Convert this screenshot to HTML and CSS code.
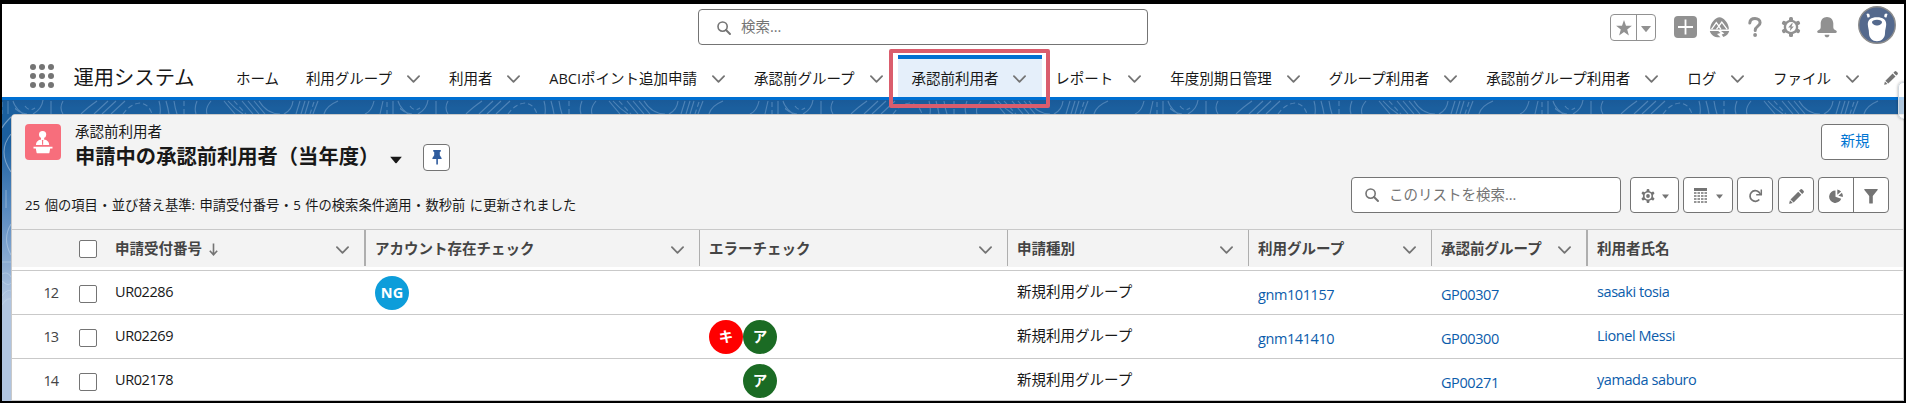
FILE: index.html
```html
<!DOCTYPE html>
<html lang="ja">
<head>
<meta charset="utf-8">
<title>承認前利用者</title>
<link rel="stylesheet" href="styles.css">
</head>
<body>
<svg class="defs" aria-hidden="true">
  <symbol id="chev" viewBox="0 0 14 8"><path d="M1 1l6 6 6-6" fill="none" stroke="currentColor" stroke-width="1.9" stroke-linecap="round" stroke-linejoin="round"/></symbol>
  <symbol id="search" viewBox="0 0 14 14"><circle cx="5.6" cy="5.6" r="4.6" fill="none" stroke="currentColor" stroke-width="1.6"/><path d="M9 9l4 4" stroke="currentColor" stroke-width="1.9" stroke-linecap="round"/></symbol>
  <symbol id="caret" viewBox="0 0 10 6"><path d="M.5 0h9q.6.1.2.6L5.400 5.700q-.4.4-.8 0L.3.600Q0 .1.500 0z" fill="currentColor"/></symbol>
  <symbol id="pencil" viewBox="0 0 14 14"><path d="M10.600.5a1.300 1.300 0 0 1 1.800 0l1.100 1.100a1.300 1.300 0 0 1 0 1.800l-1.200 1.200-2.900-2.900zM8.600 2.500l2.900 2.900-7.200 7.200-2.900-2.900zM.9 10.500l2.600 2.600-2.900.7q-.5.1-.4-.4z" fill="currentColor"/></symbol>
  <symbol id="gear" viewBox="0 0 20 20"><g fill="currentColor"><circle cx="10" cy="10" r="7.300"/><rect x="8" y="0" width="4" height="20" rx="1.500"/><rect x="8" y="0" width="4" height="20" rx="1.500" transform="rotate(60 10 10)"/><rect x="8" y="0" width="4" height="20" rx="1.500" transform="rotate(120 10 10)"/></g><circle cx="10" cy="10" r="4.900" fill="#fff"/></symbol>
</svg>
<div class="window">
  <header class="top">
    <div class="search"><svg width="14" height="14"><use href="#search"/></svg><span>検索...</span></div>
    <div class="tools">
      <div class="fav">
        <span class="fav-star"><svg width="16" height="16" viewBox="0 0 16 16"><path d="M8 0l2 5.700h5.900l-4.700 3.700L12.900 15.500 8 11.900l-4.900 3.600 1.700-6.100L.1 5.700H6z" fill="#919191"/></svg></span>
        <span class="fav-menu"><svg width="10" height="6"><use href="#caret"/></svg></span>
      </div>
      <svg class="t-add" width="23" height="22" viewBox="0 0 23 22"><rect width="23" height="22" rx="4" fill="#919191"/><path d="M11.500 3.500v15M4 11h15" stroke="#fff" stroke-width="1.800"/></svg>
      <svg class="t-trail" width="21" height="21" viewBox="0 0 21 21"><path d="M10.500.3c4 .2 8.700 5.500 9.300 10.700.1 1-.3 1.500-1 1.500H2.200c-.7 0-1.100-.5-1-1.500C1.800 5.800 6.500.5 10.500.3zM.8 14h8.400l2.300 2-3.500 1 3.500 3.200C6.500 21 2.200 18.500.8 14zM12 14h8.200c-.7 2.800-2.700 5-5.900 6l-1.600-2.400 2.700-1.200z" fill="#919191"/><path d="M2.500 12.300l4.800-6.600 2.600 3.500 2.900-4 5.400 7.100M7.500 12.300l2.400-3.100 2 3.100" fill="none" stroke="#fff" stroke-width="1.300"/></svg>
      <svg class="t-help" width="14" height="20" viewBox="0 0 14 20"><path d="M1.800 6C2 3 4 1.600 7 1.600s5.100 1.700 5.100 4.200C12.100 9.400 7.200 9 7.200 13.500" fill="none" stroke="#919191" stroke-width="3" stroke-linecap="round"/><circle cx="7.100" cy="18" r="1.900" fill="#919191"/></svg>
      <svg class="t-gear" width="20" height="20" viewBox="0 0 20 20"><use href="#gear"/><path d="M10.800 6.200L7.200 10.500h2.300l-.6 3.400 3.900-4.500h-2.400l1.500-3.200z" fill="#919191"/></svg>
      <svg class="t-bell" width="20" height="21" viewBox="0 0 20 21"><path d="M10 0c3.700 0 6.300 2.800 6.300 6.500v3.800c0 1.700 1 2.400 2.700 3.200 1.300.8.900 2.500-.4 2.500H1.400C.1 16-.3 14.300 1 13.500c1.700-.8 2.700-1.500 2.700-3.200V6.500C3.700 2.800 6.300 0 10 0zM7.700 17.700h4.600c.3 1.500-1 2.500-2.300 2.500s-2.600-1-2.300-2.500z" fill="#919191"/></svg>
      <svg class="avatar" width="38" height="38" viewBox="0 0 38 38"><circle cx="19" cy="19" r="18.300" fill="#54698d" stroke="#8c8c8c" stroke-width="1.400"/><path d="M8.500 8q1.500-1.400 3 .4l.3 2q-.8 1.600-2.300 1zM29.500 8q-1.500-1.400-3 .4l-.3 2q.8 1.600 2.300 1z" fill="#fff"/><path d="M19 11.300c6 0 9.200 2.500 9.200 7 0 3-1.200 5-1.200 9 0 4.700-3.500 8-8 8s-8-3.300-8-8c0-4-1.200-6-1.200-9 0-4.500 3.200-7 9.200-7z" fill="#fff"/><path d="M19 13.800c3 0 5 1 5 2.300 0 2-2.800 3.500-5 3.500s-5-1.500-5-3.500c0-1.300 2-2.300 5-2.300z" fill="#54698d"/></svg>
    </div>
  </header>
  <nav class="nav">
    <svg class="waffle" width="24" height="24" viewBox="0 0 24 24" fill="#747474"><circle cx="3" cy="3" r="3"/><circle cx="12" cy="3" r="3"/><circle cx="21" cy="3" r="3"/><circle cx="3" cy="12" r="3"/><circle cx="12" cy="12" r="3"/><circle cx="21" cy="12" r="3"/><circle cx="3" cy="21" r="3"/><circle cx="12" cy="21" r="3"/><circle cx="21" cy="21" r="3"/></svg>
    <span class="app">運用システム</span>
    <a class="tab tab-plain">ホーム</a>
    <a class="tab">利用グループ<svg class="chev"><use href="#chev"/></svg></a>
    <a class="tab">利用者<svg class="chev"><use href="#chev"/></svg></a>
    <a class="tab">ABCIポイント追加申請<svg class="chev"><use href="#chev"/></svg></a>
    <a class="tab">承認前グループ<svg class="chev"><use href="#chev"/></svg></a>
    <a class="tab active">承認前利用者<svg class="chev"><use href="#chev"/></svg><i class="highlight"></i></a>
    <a class="tab">レポート<svg class="chev"><use href="#chev"/></svg></a>
    <a class="tab">年度別期日管理<svg class="chev"><use href="#chev"/></svg></a>
    <a class="tab">グループ利用者<svg class="chev"><use href="#chev"/></svg></a>
    <a class="tab">承認前グループ利用者<svg class="chev"><use href="#chev"/></svg></a>
    <a class="tab">ログ<svg class="chev"><use href="#chev"/></svg></a>
    <a class="tab">ファイル<svg class="chev"><use href="#chev"/></svg></a>
    <svg class="nav-edit" width="14" height="14"><use href="#pencil"/></svg>
    <i class="handle"></i>
  </nav>
  <main class="stage">
    <svg class="contour" width="1902" height="300">
      <defs>
        <pattern id="topo" x="13" y="0" width="385" height="14" patternUnits="userSpaceOnUse">
          <g fill="none" stroke="#6f9dca" stroke-opacity=".6" stroke-width="1.100">
            <path d="M-2 6Q3 13 12 14M28 0Q27 9 18 14M36 1V14M48 1Q44 8 48 14M66 14Q72 8 82 1M79 14L93 1M87 14L101 1M96 14L110 1M144 1Q146 8 145 14M151 1Q153 8 154 14M159 1Q160 8 162 14M182 1Q179 8 181 14M196 1Q190 8 192 14M209 1L220 14M213 1Q220 9 228 14M227 1L238 14M233 1L244 14M239 1L250 14M244 1Q252 14 265 14M278 1Q277 10 269 14M285 1L281 14M290 1L286 14M294 1L290 14M303 1L298 14M309 14Q311 6 323 1M359 1Q357 11 350 14M368 1L365 14M378 1V14M383 1Q386 10 394 14M-2 1Q0 8 8 14"/>
            <path stroke-dasharray="5 3" d="M10 6Q14 12 20 8M108 14Q115 4 125 3Q134 4 137 14M169 1V14M219 1L231 14M299 2L295 14M372 2V14"/>
          </g>
        </pattern>
      </defs>
      <rect width="1902" height="14" fill="url(#topo)"/>
      <g fill="none" stroke="#c4d7ec" stroke-opacity=".5" stroke-width="1.100"><path d="M9 17Q2 24 0 28M9 34Q-5 51 9 72M4 90V108M9 124Q0 139 9 155M0 162H9M0 174Q6 171 9 177M0 181Q6 187 9 183M0 196Q5 189 9 191M0 205Q4 198 9 199"/></g>
    </svg>
    <section class="card">
      <div class="head">
        <div class="title-row">
          <svg class="obj" width="36" height="36" viewBox="0 0 36 36"><rect width="36" height="36" rx="4" fill="#f76e7c"/><g fill="#fff"><circle cx="17.600" cy="10.500" r="3.600"/><path d="M16 12h3.200v4H16zM11 21c0-3.500 2.500-5 5-5.500l1.600 1.500 1.600-1.500c2.500.5 5 2 5 5.500z"/><path d="M8.500 22.800h19v1.600h-2.300l-.8 4.300q-.2.500-.8.500h-11.200q-.6 0-.8-.5l-.8-4.300H8.500z"/></g><path d="M17.600 16.300v4.500" stroke="#f76e7c" stroke-width="1.100"/></svg>
          <div class="titles">
            <div class="kind">承認前利用者</div>
            <div class="name-row"><h1>申請中の承認前利用者（当年度）</h1><svg class="name-caret" width="12" height="8" viewBox="0 0 10 6"><use href="#caret"/></svg>
              <button class="pin"><svg width="10" height="15" viewBox="0 0 10 15"><path d="M1.200 0h7.600v1.500l-1 .5v3.200L9.600 8v1H5.900v5.500H4.300V9H.4V8l1.800-2.800V2l-1-.5z" fill="#2f5c9e"/></svg></button></div>
          </div>
          <button class="new">新規</button>
        </div>
        <div class="meta-row">
          <span class="meta">25 個の項目 • 並び替え基準: 申請受付番号 • 5 件の検索条件適用 • 数秒前 に更新されました</span>
          <div class="list-search"><svg width="14" height="14"><use href="#search"/></svg><span>このリストを検索...</span></div>
          <button class="btn wide1"><svg width="14" height="14" viewBox="0 0 20 20"><use href="#gear"/><circle cx="10" cy="10" r="2.700" fill="currentColor"/></svg><svg width="7" height="5"><use href="#caret"/></svg></button>
          <button class="btn wide2"><svg width="13" height="16" viewBox="0 0 13 16"><path d="M0 0h13v3H0z" fill="currentColor"/><path d="M0 5h13M0 8h13M0 11h13M0 14h13" stroke="currentColor" stroke-width="1.700" stroke-dasharray="2.500 1"/></svg><svg width="7" height="5"><use href="#caret"/></svg></button>
          <button class="btn sq1"><svg width="15" height="14" viewBox="0 0 15 14"><path d="M11.300 10.500A5.300 5.300 0 1 1 10.800 3L12.500 5" fill="none" stroke="currentColor" stroke-width="1.700"/><path d="M13.300.6v5.200H8.200" fill="none" stroke="currentColor" stroke-width="1.500"/></svg></button>
          <button class="btn sq2"><svg width="15" height="15"><use href="#pencil"/></svg></button>
          <div class="group">
            <span><svg width="15" height="15" viewBox="0 0 15 15"><path d="M6.500 1.500v6.300l5.700 1.900A6.200 6.200 0 1 1 6.500 1.500z" fill="currentColor"/><path d="M8.300.5a6 6 0 0 1 3.800 2L8.300 5.800zM12.900 3.800q1.200 1.900.9 4.200L9.400 6.800z" fill="currentColor"/></svg></span>
            <span><svg width="14" height="15" viewBox="0 0 14 15"><path d="M.7 0h12.600q.8.200.3 1L8.800 7v7q0 .6-.6.6H5.800q-.6 0-.6-.6V7L.4 1Q-.1.200.7 0z" fill="currentColor"/></svg></span>
          </div>
        </div>
      </div>
      <div class="grid thead">
        <span></span><span class="check"><i></i></span>
        <span class="th">申請受付番号<svg class="sort" width="9" height="13" viewBox="0 0 9 13"><path d="M4.500.5v11M.8 7.800l3.700 4 3.700-4" fill="none" stroke="currentColor" stroke-width="1.600"/></svg><svg class="chev"><use href="#chev"/></svg></span>
        <span class="th thick">アカウント存在チェック<svg class="chev"><use href="#chev"/></svg></span>
        <span class="th">エラーチェック<svg class="chev"><use href="#chev"/></svg></span>
        <span class="th">申請種別<svg class="chev"><use href="#chev"/></svg></span>
        <span class="th">利用グループ<svg class="chev"><use href="#chev"/></svg></span>
        <span class="th">承認前グループ<svg class="chev"><use href="#chev"/></svg></span>
        <span class="th thick">利用者氏名</span>
      </div>
      <div class="grid row">
        <span class="num">12</span><span class="check"><i></i></span><span class="td latin">UR02286</span>
        <span class="td wide"><b class="dot blue">NG</b></span><span class="td"></span>
        <span class="td jp">新規利用グループ</span><a class="td latin low">gnm101157</a><a class="td latin low">GP00307</a><a class="td latin wide">sasaki tosia</a>
      </div>
      <div class="grid row">
        <span class="num">13</span><span class="check"><i></i></span><span class="td latin">UR02269</span>
        <span class="td wide"></span><span class="td"><b class="dot red">キ</b><b class="dot green">ア</b></span>
        <span class="td jp">新規利用グループ</span><a class="td latin low">gnm141410</a><a class="td latin low">GP00300</a><a class="td latin wide">Lionel Messi</a>
      </div>
      <div class="grid row">
        <span class="num">14</span><span class="check"><i></i></span><span class="td latin">UR02178</span>
        <span class="td wide"></span><span class="td"><b class="dot gap"></b><b class="dot green">ア</b></span>
        <span class="td jp">新規利用グループ</span><a class="td latin low"></a><a class="td latin low">GP00271</a><a class="td latin wide">yamada saburo</a>
      </div>
    </section>
  </main>
</div>
</body>
</html>
```
FILE: styles.css
```css
* { box-sizing: border-box; }
body {
  margin: 0;
  background: #000;
  color: #181818;
  font: 14.5px/20px "Open Sans", "Noto Sans CJK JP", sans-serif;
  overflow: hidden;
}
svg { display: block; flex: none; }
button { font: inherit; padding: 0; margin: 0; }
.defs { position: absolute; width: 0; height: 0; }
.window {
  width: 1906px;
  height: 403px;
  border: solid #000;
  border-width: 4px 2px 2px;
  background: #fff;
  overflow: hidden;
}

/* global header */
.top { height: 46px; display: flex; position: relative; }
.search {
  width: 450px;
  height: 36px;
  margin: 5px 0 0 696px;
  padding: 0 18px;
  display: flex;
  align-items: center;
  gap: 10px;
  border: 1px solid #747474;
  border-radius: 4px;
  color: #747474;
}
.search svg { margin-top: 2px; }
.tools { display: flex; margin-left: 462px; align-items: flex-start; }
.fav {
  display: flex;
  width: 46px;
  height: 27px;
  margin-top: 10px;
  border: 1px solid #919191;
  border-radius: 4px;
  color: #919191;
}
.fav span { display: flex; align-items: center; justify-content: center; }
.fav-star { width: 25px; }
.fav-menu { flex: 1; border-left: 1px solid #919191; padding-top: 2px; }
.t-add { margin: 12px 0 0 18px; }
.t-trail { margin: 13px 0 0 12px; }
.t-help { margin: 13px 0 0 18px; }
.t-gear { margin: 13px 0 0 19px; color: #919191; }
.t-bell { margin: 13px 0 0 16px; }
.avatar { margin: 2px 0 0 21px; }

/* app navigation */
.nav {
  position: relative;
  height: 50px;
  display: flex;
  align-items: flex-end;
  border-bottom: 3px solid #0070d2;
}
.waffle { margin: 0 0 9px 28px; }
.app { font-size: 20.3px; width: 149.5px; margin: 0 0 10px 19.5px; white-space: nowrap; flex: none; }
.tab {
  position: relative;
  display: flex;
  align-items: center;
  height: 42px;
  padding: 1px 15.9px 0 13px;
  border-top: 4px solid transparent;
  white-space: nowrap;
  flex: none;
}
.tab-plain { padding-right: 13.8px; }
.tab .chev { margin: 1px 0 0 15px; }
.chev { width: 13px; height: 8px; color: #747474; }
.active { background: #e5effa; border-top-color: #0070d2; }
.highlight {
  position: absolute;
  left: -9px;
  top: -10px;
  width: 161px;
  height: 59px;
  border: 4px solid #da5d6d;
  border-radius: 2px;
  z-index: 2;
}
.nav-edit { color: #747474; margin: 0 0 12px 9px; }
.handle {
  position: absolute;
  left: 1896px;
  top: 32px;
  width: 12px;
  height: 37px;
  border: 1px solid #d0d8e0;
  border-radius: 5px;
  background: rgba(255, 255, 255, .65);
  box-shadow: 0 0 3px rgba(0, 0, 0, .35);
  z-index: 2;
}

/* page body */
.stage {
  position: relative;
  height: 301px;
  padding: 14px 0 0 9px;
  background: linear-gradient(#1a5a98 0, #1b5f9e 8px, #1b5f9e 40px, #4c82ba 95px, #6b96c6 130px, #b0c4df 200px);
}
.contour { position: absolute; left: 0; top: 0; }
.card {
  position: relative;
  height: 287px;
  border: 1px solid #c9c9c9;
  border-radius: 4px 0 0 0;
  background: #fff;
  overflow: hidden;
}
.head { height: 114px; padding: 9px 14px 0 13px; background: #f3f3f3; }
.title-row { display: flex; height: 58px; }
.titles { margin-left: 14px; flex: 1; }
.kind { line-height: 18px; margin-top: -1px; }
.name-row { display: flex; align-items: center; height: 29px; margin-top: 2px; }
h1 { margin: 0; padding-bottom: 3px; font-size: 20.3px; line-height: 26px; font-weight: 700; width: 304px; white-space: nowrap; }
.name-caret { margin: 4px 0 0 11px; }
.pin {
  width: 27px;
  height: 27px;
  margin-left: 21px;
  display: flex;
  align-items: center;
  justify-content: center;
  border: 1px solid #747474;
  border-radius: 4px;
  background: #fff;
}
.new {
  width: 68px;
  height: 36px;
  padding-bottom: 3px;
  border: 1px solid #747474;
  border-radius: 4px;
  background: #fff;
  color: #0176d3;
}
.meta-row { display: flex; align-items: flex-start; height: 40px; }
.meta { font-size: 13.3px; word-spacing: 1px; width: 1326px; margin-top: 13px; white-space: nowrap; }
.list-search, .btn, .group {
  height: 36px;
  margin-top: -5px;
  border: 1px solid #747474;
  border-radius: 4px;
  background: #fff;
  color: #747474;
  display: flex;
  align-items: center;
  justify-content: center;
  flex: none;
}
.list-search { width: 270px; padding: 0 13px 1px; gap: 10px; justify-content: flex-start; }
.btn { padding-top: 2px; gap: 7px; }
.wide1 { width: 49px; margin-left: 9px; }
.wide2 { width: 50px; margin-left: 4px; gap: 9px; }
.sq1 { width: 36px; margin-left: 4px; }
.sq2 { width: 36px; margin-left: 5px; }
.group { width: 71px; margin-left: 4px; }
.group span { flex: 1; height: 100%; display: flex; align-items: center; justify-content: center; padding-top: 2px; }
.group span + span { border-left: 1px solid #747474; }

/* list table */
.grid { display: grid; grid-template-columns: 67px 26px 259px 335px 308px 241px 183px 155px 1fr; }
.thead {
  height: 38px;
  background: #f3f3f3;
  border-top: 1px solid #c9c9c9;
  color: #444;
  font-weight: 700;
  margin-bottom: 3px;
}
.th { display: flex; align-items: center; height: 36px; padding: 2px 15px 0 9px; border-left: 1px solid #aeaeae; white-space: nowrap; }
.th .chev { margin-left: auto; margin-top: 2px; }
.th:nth-child(3) { border-left-color: transparent; }
.thick { border-left-width: 2px; }
.sort { margin-left: 7px; color: #747474; }
.check i { display: block; width: 18px; height: 18px; border: 1px solid #747474; border-radius: 2px; background: #fff; margin-top: 14px; }
.thead .check i { margin-top: 10px; }
.row { height: 44px; border-top: 1px solid #c9c9c9; }
.num { padding: 12px 0 0 31.5px; color: #444; letter-spacing: -1px; }
.td { display: flex; padding: 0 0 0 10px; white-space: nowrap; height: 43px; }
.wide { padding-left: 11px; }
.latin { padding-top: 11px; letter-spacing: -.42px; }
.jp { padding-top: 11px; }
.low { padding-top: 14px; }
a.td { color: #0b5cab; }
.dot {
  width: 34px;
  height: 34px;
  margin-top: 5px;
  border-radius: 50%;
  color: #fff;
  display: flex;
  align-items: center;
  justify-content: center;
  font-size: 14.5px;
  flex: none;
}
.blue { background: #0d9dda; }
.red { background: #f00; }
.green { background: #1b6b24; }
.gap { visibility: hidden; }
```
